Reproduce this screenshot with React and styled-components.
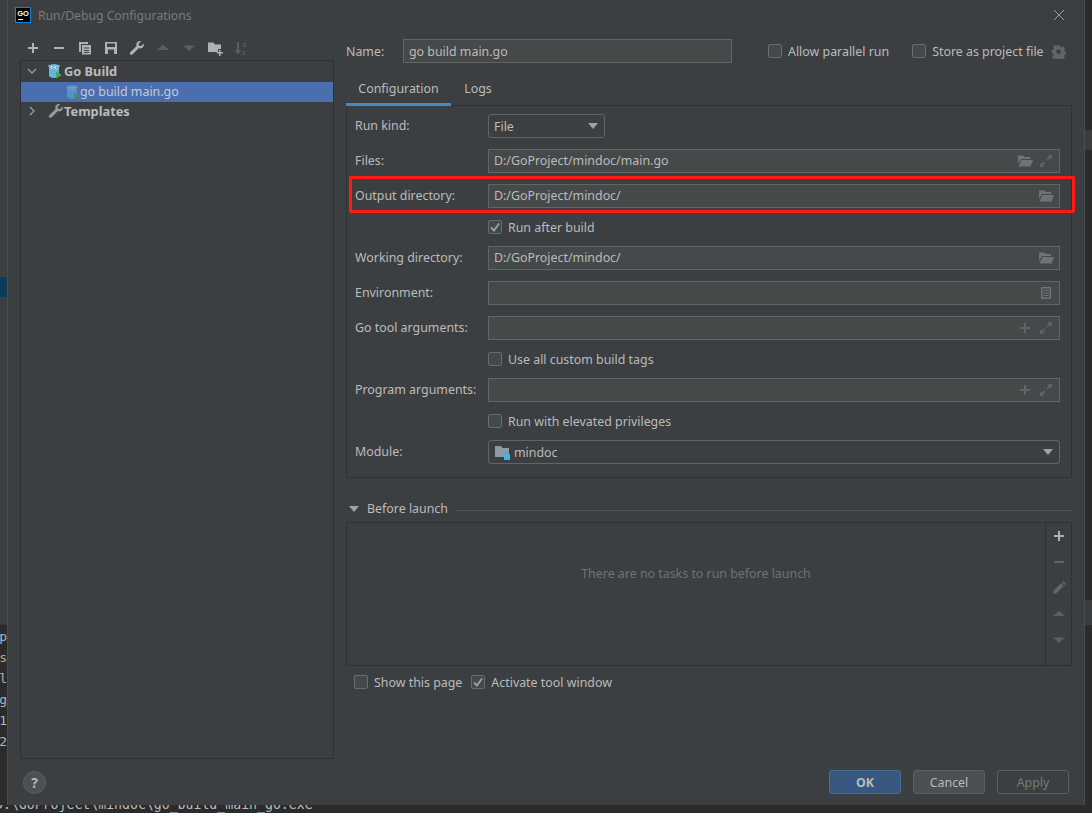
import React from "react";
import styled, { createGlobalStyle } from "styled-components";

const GlobalStyle = createGlobalStyle`
  html, body { margin: 0; padding: 0; background: #2b2b2b; }
  body { font-family: "Noto Sans", "Open Sans", sans-serif; font-size: 12.4px; color: #bbbbbb; overflow: hidden; }
  * { box-sizing: border-box; }
`;

/* icons, all drawn on a 16x16 box */
const Svg = ({ size = 16, color = "#afb1b3", children }) => (
  <svg width={size} height={size} viewBox="0 0 16 16" fill={color} style={{ display: "block" }}>
    {children}
  </svg>
);

const PlusIcon = ({ color }) => <Svg color={color}><path d="M7 3h2v4h4v2H9v4H7V9H3V7h4z" /></Svg>;
const MinusIcon = ({ color }) => <Svg color={color}><path d="M3 7h10v2H3z" /></Svg>;
const CopyIcon = () => (
  <Svg>
    <path d="M2 2h9v2H4v8H2z" />
    <path fillRule="evenodd" d="M5 5h9v9.5H5zM7 7.5v1h5v-1zM7 10v1h5v-1zM7 12v1h5v-1z" />
  </Svg>
);
const SaveIcon = () => (
  <Svg>
    <path fillRule="evenodd" d="M2 2h12v12H2zM4 3.500V7h8V3.500zM5 9.500V14h6V9.500z" />
  </Svg>
);
const WrenchIcon = ({ color }) => (
  <Svg color={color}>
    <path d="M14.6 3.6 12 6.1l-2-.3-.4-2L12.2 1.2C10.4.6 8.4 1.3 7.6 3c-.4 1-.4 2 0 2.9L1.3 12.2c-.6.6-.6 1.6 0 2.2.6.6 1.6.6 2.2 0l6.4-6.3c1 .4 2 .4 2.9 0 1.8-.8 2.5-2.7 1.8-4.5z" />
  </Svg>
);
const PencilIcon = () => (
  <Svg color="#5f6466">
    <path d="M10 3.200 12.800 6 5 13.800H2.200V11z" />
    <path d="M11.500 1.700c.4-.4 1-.4 1.400 0l1.400 1.400c.4.4.4 1 0 1.400l-.8.800L10.700 2.500z" />
  </Svg>
);
const UpIcon = ({ color = "#5b5e60" }) => <Svg color={color}><path d="M8 4.5 14 10H2z" /></Svg>;
const DownIcon = ({ color = "#5b5e60" }) => <Svg color={color}><path d="M8 11 2 5.5h12z" /></Svg>;
const NewFolderIcon = () => (
  <Svg>
    <path d="M1 2.5h5.5L8 4.5h6V9h-3v3H1z" />
    <path d="M12 10h1.5v2H16v1.5h-2.5V16H12v-2.5H9.8V12H12z" />
  </Svg>
);
const SortIcon = () => (
  <svg width="18" height="18" viewBox="0 0 18 18" style={{ display: "block" }}>
    <path d="M5 3h2v8h2.500L6 15.500 2.500 11H5z" fill="#5b5e60" />
    <text x="10" y="8" fontSize="8" fontFamily="Liberation Sans, sans-serif" fill="#5b5e60">a</text>
    <text x="10" y="15.500" fontSize="8" fontFamily="Liberation Sans, sans-serif" fill="#5b5e60">z</text>
  </svg>
);
const FolderOpenIcon = () => (
  <Svg color="#6e7476">
    <path d="M1 2.500h5l1.500 1.500H13v2H4L1 11z" />
    <path d="M4.500 7H16l-2.500 6.500H1.500z" />
  </Svg>
);
const ExpandIcon = () => (
  <Svg color="#5f6466">
    <path d="M9.500 2H14v4.500l-1.600-1.600-2.600 2.600-1.300-1.300 2.600-2.600z" />
    <path d="M6.500 14H2V9.500l1.600 1.600 2.600-2.600 1.300 1.300-2.600 2.600z" />
  </Svg>
);
const ListIcon = () => (
  <Svg color="#6e7476">
    <path fillRule="evenodd" d="M3 2h10v12H3zM4.500 3.500v9h7v-9zM5.500 5h5v1h-5zM5.500 7.500h5v1h-5zM5.500 10h5v1h-5z" />
  </Svg>
);
const GearIcon = () => (
  <Svg size={15} color="#5f6466">
    <path fillRule="evenodd" d="M6.500 1h3l.4 2 1.400.6 1.700-1.100 2 2.100-1.100 1.700.5 1.300 2 .4v3l-2 .4-.5 1.300 1.100 1.700-2 2-1.700-1.100-1.400.6-.4 2h-3l-.4-2-1.400-.6-1.700 1.100-2-2 1.100-1.700L2.600 10 .6 9.600v-3l2-.4.5-1.300L2 3.200l2-2.100 1.700 1.100 1.400-.6zM8 5.600a2.500 2.500 0 1 0 0 5 2.500 2.500 0 0 0 0-5z" />
  </Svg>
);
const CloseIcon = () => (
  <svg width="12" height="12" viewBox="0 0 12 12" style={{ display: "block" }}>
    <path d="M1 1l10 10M11 1 1 11" stroke="#9a9c9e" strokeWidth="1" fill="none" />
  </svg>
);
const Chevron = ({ open }) => (
  <svg width="10" height="10" viewBox="0 0 10 10" style={{ display: "block" }}>
    <path d={open ? "M1 3l4 4 4-4" : "M3 1l4 4-4 4"} stroke="#9a9c9e" strokeWidth="1.300" fill="none" />
  </svg>
);
const Gopher = ({ faded }) => (
  <svg width="14" height="16" viewBox="0 0 14 16" style={{ display: "block", opacity: faded ? 0.5 : 1 }}>
    <circle cx="1.500" cy="3" r="1.300" fill="#6fb5d6" />
    <circle cx="10.500" cy="3" r="1.300" fill="#6fb5d6" />
    <path d="M1 4c0-2 2.200-3 5-3s5 1 5 3v8.500c0 1.500-2.200 2.500-5 2.500s-5-1-5-2.500z" fill="#62b5dc" />
    <circle cx="4" cy="4.200" r="1.500" fill="#e6f3f8" />
    <circle cx="8" cy="4.200" r="1.500" fill="#e6f3f8" />
    <circle cx="4.300" cy="4.400" r=".6" fill="#27424f" />
    <circle cx="8.300" cy="4.400" r=".6" fill="#27424f" />
    <path d="M8 8.500 14 12l-6 3.500z" fill="#4aa548" />
  </svg>
);
const GoLogo = () => (
  <svg width="16" height="16" viewBox="0 0 16 16" style={{ display: "block" }}>
    <rect x=".5" y=".5" width="15" height="15" fill="#000" stroke="#0d83e0" />
    <text x="8" y="8.500" textAnchor="middle" fontSize="7.500" fontWeight="700" fontFamily="Liberation Sans, sans-serif" fill="#fff">GO</text>
    <path d="M3 12h5v1H3z" fill="#fff" />
  </svg>
);
const ModuleIcon = () => (
  <svg width="16" height="16" viewBox="0 0 16 16" style={{ display: "block" }}>
    <path d="M1 2h6l1.500 2H15v9H1z" fill="#8d9aa3" />
    <path d="M10 10h6v6h-6z" fill="#40b6e0" />
  </svg>
);
const ComboArrow = () => (
  <svg width="10" height="6" viewBox="0 0 10 6" style={{ display: "block" }}>
    <path d="M0 0h10L5 6z" fill="#a0a2a4" />
  </svg>
);
const CheckMark = () => (
  <svg width="10" height="10" viewBox="0 0 10 10" style={{ display: "block" }}>
    <path d="M1 5.500 4 8.500 9 1.500" stroke="#a0a0a0" strokeWidth="1.800" fill="none" />
  </svg>
);

/* page frame: the IDE peeks out behind the dialog */
const Screen = styled.div`
  width: 1092px;
  height: 813px;
  display: grid;
  grid-template-columns: 7px 1078px 7px;
  grid-template-rows: 805px 8px;
  overflow: hidden;
`;

const LeftStrip = styled.div`
  display: flex;
  flex-direction: column;
  background: #3c3f41;
  overflow: hidden;
`;

const LeftTop = styled.div`
  height: 625px;
  padding-top: 277px;
  flex: none;
  border-bottom: 1px solid #333537;
`;

const BlueMark = styled.div`
  height: 20px;
  background: #0d3a58;
`;

const ConsoleLines = styled.div`
  flex: 1;
  background: #2b2b2b;
  padding-top: 1px;
  display: flex;
  flex-direction: column;
  align-items: flex-end;
  font-family: "DejaVu Sans Mono", monospace;
  font-size: 13px;
  line-height: 21px;
`;

const ConsoleLine = styled.div`
  color: ${(p) => p.$color || "#a9b7c6"};
  white-space: nowrap;
`;

const OrangeChar = styled.span`
  color: #c9a26d;
`;

const RightStrip = styled.div`
  background: #2b2b2b;
  display: flex;
  flex-direction: column;
`;

const RightBlock = styled.div`
  height: ${(p) => p.$h}px;
  flex: none;
  background: ${(p) => p.$bg || "#2b2b2b"};
`;

const BottomStrip = styled.div`
  grid-column: 1 / 4;
  background: #2b2b2b;
  overflow: hidden;
  font-family: "DejaVu Sans Mono", monospace;
  font-size: 13.2px;
  line-height: 18px;
  color: #bbbbbb;
  white-space: nowrap;
`;

const ConsoleTail = styled.div`
  margin-top: -9px;
  margin-left: -5px;
`;

const Dialog = styled.div`
  background: #3c3f41;
  border-left: 1px solid #4a4d4f;
  border-right: 1px solid #4a4d4f;
  display: flex;
  flex-direction: column;
  min-width: 0;
`;

const TitleBar = styled.div`
  height: 30px;
  flex: none;
  display: flex;
  align-items: center;
  padding: 0 19px 0 7px;
  gap: 7px;
`;

const TitleText = styled.div`
  flex: 1;
  color: #777a7c;
  font-size: 12.2px;
`;

const Body = styled.div`
  flex: 1;
  min-height: 0;
  display: grid;
  grid-template-columns: 314px 726px;
  column-gap: 12px;
  padding: 8px 0 0 12px;
`;

const LeftColumn = styled.div`
  display: flex;
  flex-direction: column;
  min-height: 0;
`;

const Toolbar = styled.div`
  height: 22px;
  flex: none;
  display: flex;
  align-items: flex-start;
  padding-top: 1px;
`;

const ToolSlot = styled.div`
  width: 26px;
  height: 18px;
  display: flex;
  align-items: center;
  justify-content: center;
`;

const Tree = styled.div`
  flex: 1;
  border: 1px solid #2f3133;
  padding-top: 1px;
`;

const TreeRow = styled.div`
  height: 20px;
  display: flex;
  align-items: center;
  padding-left: ${(p) => p.$indent}px;
  padding-bottom: ${(p) => (p.$bold ? 2 : 1)}px;
  background: ${(p) => (p.$selected ? "#4b6eaf" : "transparent")};
  font-weight: ${(p) => (p.$bold ? 700 : 400)};
  font-size: ${(p) => (p.$bold ? "12.8px" : "12.4px")};
  color: ${(p) => (p.$selected ? "#c5cbd6" : "#bbbbbb")};
`;

const TreeArrow = styled.div`
  width: 21px;
  flex: none;
`;

const TreeIcon = styled.div`
  width: 14px;
  margin-right: ${(p) => p.$gap || 0}px;
  flex: none;
`;

const RightColumn = styled.div`
  display: flex;
  flex-direction: column;
  min-height: 0;
  padding-top: 1px;
`;

const NameRow = styled.div`
  height: 24px;
  flex: none;
  display: flex;
  align-items: center;
`;

const NameLabel = styled.div`
  width: 57px;
  flex: none;
`;

const NameInput = styled.div`
  width: 329px;
  height: 24px;
  flex: none;
  margin-right: 36px;
  display: flex;
  align-items: center;
  padding-left: 5px;
  background: #45494a;
  border: 1px solid #646464;
`;

const NameOptions = styled.div`
  display: flex;
  align-items: center;
  gap: 23px;
`;

const GearSlot = styled.div`
  margin-left: 7px;
`;

const Tabs = styled.div`
  display: flex;
  height: 31px;
  margin-top: 12px;
  flex: none;
  position: relative;
  z-index: 1;
`;

const Tab = styled.div`
  width: ${(p) => p.$w}px;
  display: flex;
  align-items: center;
  justify-content: center;
  padding-bottom: 2px;
  border-bottom: 3px solid ${(p) => (p.$active ? "#4a88c7" : "transparent")};
`;

const ConfigPanel = styled.div`
  margin-top: -1px;
  border: 1px solid #2f3133;
  padding: 8px 11px 13px 8px;
  display: grid;
  grid-template-columns: 133px 572px;
  row-gap: 11px;
  align-items: center;
`;

const Label = styled.div`
  grid-column: 1;
  padding-bottom: 1px;
`;

const FieldBox = styled.div`
  grid-column: 2;
  height: 24px;
  display: flex;
  align-items: center;
  padding: 0 3px 0 5px;
  background: #45494a;
  border: 1px solid #646464;
  position: relative;
`;

const FieldValue = styled.div`
  flex: 1;
  padding-bottom: 1px;
`;

const FieldAction = styled.div`
  width: 21px;
  display: flex;
  justify-content: center;
`;

const ComboBox = styled.div`
  grid-column: 2;
  width: ${(p) => p.$w || "100%"};
  height: 24px;
  display: flex;
  align-items: center;
  padding: 0 6px 0 5px;
  gap: 4px;
  background: #3c3f41;
  border: 1px solid #646464;
  border-radius: 3px;
`;

const ComboValue = styled.div`
  flex: 1;
`;

const CheckRow = styled.div`
  grid-column: ${(p) => (p.$inGrid ? 2 : "auto")};
  height: 16px;
  display: flex;
  align-items: center;
  gap: 6px;
  flex: none;
  white-space: nowrap;
`;

const CheckBox = styled.div`
  width: 14px;
  height: 14px;
  flex: none;
  display: flex;
  align-items: center;
  justify-content: center;
  background: #43494a;
  border: 1px solid #6b6b6b;
  border-radius: 2px;
`;

const RedMark = styled.div`
  position: absolute;
  left: -140px;
  right: -16px;
  top: -9px;
  bottom: -6px;
  border: 3px solid #ff1a14;
  border-radius: 2px;
  pointer-events: none;
`;

const SectionHead = styled.div`
  height: 23px;
  margin: 19px 0 2px;
  flex: none;
  display: flex;
  align-items: center;
  padding-left: 3px;
  gap: 8px;
`;

const SectionLine = styled.div`
  flex: 1;
  height: 1px;
  margin-top: 3px;
  background: #505254;
`;

const TasksPanel = styled.div`
  height: 144px;
  flex: none;
  display: grid;
  grid-template-columns: 1fr 26px;
  border: 1px solid #2f3133;
`;

const EmptyTasks = styled.div`
  display: flex;
  align-items: center;
  justify-content: center;
  color: #6f7274;
  padding-bottom: 41px;
`;

const TasksTools = styled.div`
  border-left: 1px solid #2f3133;
  display: flex;
  flex-direction: column;
  align-items: center;
  padding-top: 5px;
  gap: 10px;
`;

const PageOptions = styled.div`
  display: flex;
  margin-top: 8px;
  padding-left: 8px;
  gap: 9px;
`;

const Footer = styled.div`
  flex: none;
  display: flex;
  align-items: center;
  padding: 11px 15px 11px 15px;
  height: 46px;
`;

const HelpButton = styled.div`
  width: 23px;
  height: 23px;
  border-radius: 50%;
  background: #4c5052;
  border: 1px solid #5e6060;
  display: flex;
  align-items: center;
  justify-content: center;
  font-weight: 700;
  font-size: 14px;
  color: #b4b6b8;
  margin-right: auto;
`;

const Button = styled.div`
  width: 72px;
  height: 24px;
  margin-left: 12px;
  display: flex;
  align-items: center;
  justify-content: center;
  border-radius: 3px;
  border: 1px solid ${(p) => (p.$primary ? "#4c708c" : "#5e6060")};
  background: ${(p) => (p.$primary ? "#365880" : p.$disabled ? "transparent" : "#4c5052")};
  color: ${(p) => (p.$disabled ? "#777a7c" : "#bbbbbb")};
  font-weight: ${(p) => (p.$primary ? 700 : 400)};
`;

const Option = ({ checked, inGrid, children }) => (
  <CheckRow $inGrid={inGrid}>
    <CheckBox>{checked && <CheckMark />}</CheckBox>
    <span>{children}</span>
  </CheckRow>
);

const Field = ({ value, actions = [], marked }) => (
  <FieldBox>
    <FieldValue>{value}</FieldValue>
    {actions.map((action, i) => (
      <FieldAction key={i}>{action}</FieldAction>
    ))}
    {marked && <RedMark />}
  </FieldBox>
);

const dimPlus = <PlusIcon color="#5f6466" />;

const App = () => (
  <Screen>
    <GlobalStyle />
    <LeftStrip>
      <LeftTop>
        <BlueMark />
      </LeftTop>
      <ConsoleLines>
        <ConsoleLine><OrangeChar>u</OrangeChar>p</ConsoleLine>
        <ConsoleLine $color="#c9a26d">os</ConsoleLine>
        <ConsoleLine>ll</ConsoleLine>
        <ConsoleLine>ig</ConsoleLine>
        <ConsoleLine>1</ConsoleLine>
        <ConsoleLine>2</ConsoleLine>
      </ConsoleLines>
    </LeftStrip>

    <Dialog>
      <TitleBar>
        <GoLogo />
        <TitleText>Run/Debug Configurations</TitleText>
        <CloseIcon />
      </TitleBar>

      <Body>
        <LeftColumn>
          <Toolbar>
            <ToolSlot><PlusIcon /></ToolSlot>
            <ToolSlot><MinusIcon /></ToolSlot>
            <ToolSlot><CopyIcon /></ToolSlot>
            <ToolSlot><SaveIcon /></ToolSlot>
            <ToolSlot><WrenchIcon /></ToolSlot>
            <ToolSlot><UpIcon /></ToolSlot>
            <ToolSlot><DownIcon /></ToolSlot>
            <ToolSlot><NewFolderIcon /></ToolSlot>
            <ToolSlot><SortIcon /></ToolSlot>
          </Toolbar>
          <Tree>
            <TreeRow $indent={6} $bold>
              <TreeArrow><Chevron open /></TreeArrow>
              <TreeIcon $gap={2}><Gopher /></TreeIcon>
              <span>Go Build</span>
            </TreeRow>
            <TreeRow $indent={45} $selected>
              <TreeIcon><Gopher faded /></TreeIcon>
              <span>go build main.go</span>
            </TreeRow>
            <TreeRow $indent={6} $bold>
              <TreeArrow><Chevron /></TreeArrow>
              <TreeIcon $gap={2}><WrenchIcon color="#9a9c9e" /></TreeIcon>
              <span>Templates</span>
            </TreeRow>
          </Tree>
        </LeftColumn>

        <RightColumn>
          <NameRow>
            <NameLabel>Name:</NameLabel>
            <NameInput>go build main.go</NameInput>
            <NameOptions>
              <Option>Allow parallel run</Option>
              <Option>Store as project file</Option>
            </NameOptions>
            <GearSlot><GearIcon /></GearSlot>
          </NameRow>

          <Tabs>
            <Tab $w={105} $active>Configuration</Tab>
            <Tab $w={54}>Logs</Tab>
          </Tabs>

          <ConfigPanel>
            <Label>Run kind:</Label>
            <ComboBox $w="117px">
              <ComboValue>File</ComboValue>
              <ComboArrow />
            </ComboBox>

            <Label>Files:</Label>
            <Field value="D:/GoProject/mindoc/main.go" actions={[<FolderOpenIcon />, <ExpandIcon />]} />

            <Label>Output directory:</Label>
            <Field value="D:/GoProject/mindoc/" actions={[<FolderOpenIcon />]} marked />

            <Option inGrid checked>Run after build</Option>

            <Label>Working directory:</Label>
            <Field value="D:/GoProject/mindoc/" actions={[<FolderOpenIcon />]} />

            <Label>Environment:</Label>
            <Field actions={[<ListIcon />]} />

            <Label>Go tool arguments:</Label>
            <Field actions={[dimPlus, <ExpandIcon />]} />

            <Option inGrid>Use all custom build tags</Option>

            <Label>Program arguments:</Label>
            <Field actions={[dimPlus, <ExpandIcon />]} />

            <Option inGrid>Run with elevated privileges</Option>

            <Label>Module:</Label>
            <ComboBox>
              <ModuleIcon />
              <ComboValue>mindoc</ComboValue>
              <ComboArrow />
            </ComboBox>
          </ConfigPanel>

          <SectionHead>
            <ComboArrow />
            <span>Before launch</span>
            <SectionLine />
          </SectionHead>

          <TasksPanel>
            <EmptyTasks>There are no tasks to run before launch</EmptyTasks>
            <TasksTools>
              <PlusIcon />
              <MinusIcon color="#5f6466" />
              <PencilIcon />
              <UpIcon />
              <DownIcon />
            </TasksTools>
          </TasksPanel>

          <PageOptions>
            <Option>Show this page</Option>
            <Option checked>Activate tool window</Option>
          </PageOptions>
        </RightColumn>
      </Body>

      <Footer>
        <HelpButton>?</HelpButton>
        <Button $primary>OK</Button>
        <Button>Cancel</Button>
        <Button $disabled>Apply</Button>
      </Footer>
    </Dialog>

    <RightStrip>
      <RightBlock $h={130} />
      <RightBlock $h={20} $bg="#3a3c3e" />
      <RightBlock $h={450} />
      <RightBlock $h={25} $bg="#3a3d3f" />
    </RightStrip>

    <BottomStrip>
      <ConsoleTail>D:\GoProject\mindoc\go_build_main_go.exe</ConsoleTail>
    </BottomStrip>
  </Screen>
);

export default App;
